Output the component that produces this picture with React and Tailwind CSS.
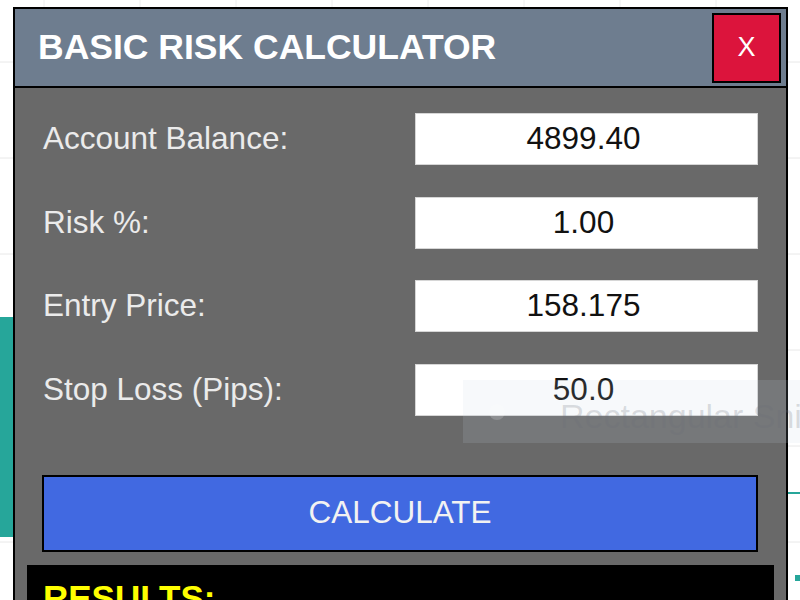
import React from "react";

const rows = [
  ["Account Balance:", "4899.40"],
  ["Risk %:", "1.00"],
  ["Entry Price:", "158.175"],
  ["Stop Loss (Pips):", "50.0"],
];

export default function App() {
  const vx = [44, 140, 236, 332, 428, 524, 620, 716];
  const hy = [62, 158, 254, 350, 446, 542];
  return (
    <div
      className="relative w-[800px] h-[600px] overflow-hidden bg-white"
      style={{ fontFamily: '"Liberation Sans", Arial, sans-serif' }}
    >
      <svg className="absolute inset-0" width="800" height="600">
        {vx.map((x) => (
          <line key={"v" + x} x1={x} y1="0" x2={x} y2="600" stroke="#eeeeee" strokeWidth="1" />
        ))}
        {hy.map((y) => (
          <line key={"h" + y} x1="0" y1={y} x2="800" y2={y} stroke="#e8e8e8" strokeWidth="1" />
        ))}
        <rect x="0" y="317" width="13" height="220" fill="#26a69a" />
        <line x1="788" y1="493" x2="800" y2="493" stroke="#26a69a" strokeWidth="2" />
        <rect x="795" y="575" width="5" height="6" fill="#26a69a" />
      </svg>

      <div className="absolute left-[13px] top-[7px] w-[775px] h-[640px] border-2 border-black bg-[#696969] flex flex-col">
        <div className="h-[79px] shrink-0 bg-[#6e7d8f] border-b-2 border-black flex items-center justify-between pl-[23px] pr-[5px]">
          <span className="text-white font-bold text-[35.5px] leading-none">BASIC RISK CALCULATOR</span>
          <div className="w-[69px] h-[70px] bg-[#dc143c] border-2 border-black flex items-center justify-center text-white text-[27px] leading-none">
            X
          </div>
        </div>

        <div className="flex flex-col pt-[25px] px-[28px]">
          <div className="flex flex-col gap-[31.5px]">
            {rows.map(([label, value]) => (
              <div key={label} className="flex items-center justify-between h-[52px]">
                <span className="text-[#ebebeb] text-[31.5px] leading-none">{label}</span>
                <div className="w-[343px] h-[52px] bg-white border border-[#d6d6d6] flex items-center justify-center text-[#111111] text-[31.5px] leading-none pr-[6px]">
                  {value}
                </div>
              </div>
            ))}
          </div>

          <div className="mt-[59px] -ml-px h-[77px] bg-[#4169e1] border-2 border-black flex items-center justify-center text-[#f2f2f2] text-[31.5px] leading-none">
            CALCULATE
          </div>

          <div className="mt-[13px] -mx-[16px] h-[200px] bg-black pl-[16px] pt-[15px]">
            <span className="text-[#ffff00] font-bold text-[35px] leading-none">RESULTS:</span>
          </div>
        </div>
      </div>

      <div className="absolute left-[463px] top-[380px] w-[337px] h-[63px] bg-[rgba(195,210,230,0.14)] flex items-center pl-[26px] overflow-hidden">
        <div className="w-[16px] h-[16px] rounded-full bg-[rgba(255,255,255,0.18)] mr-[55px] shrink-0" />
        <span className="text-[rgba(105,110,120,0.22)] text-[34px] leading-none whitespace-nowrap pt-[8px]">Rectangular Snip</span>
      </div>
    </div>
  );
}
